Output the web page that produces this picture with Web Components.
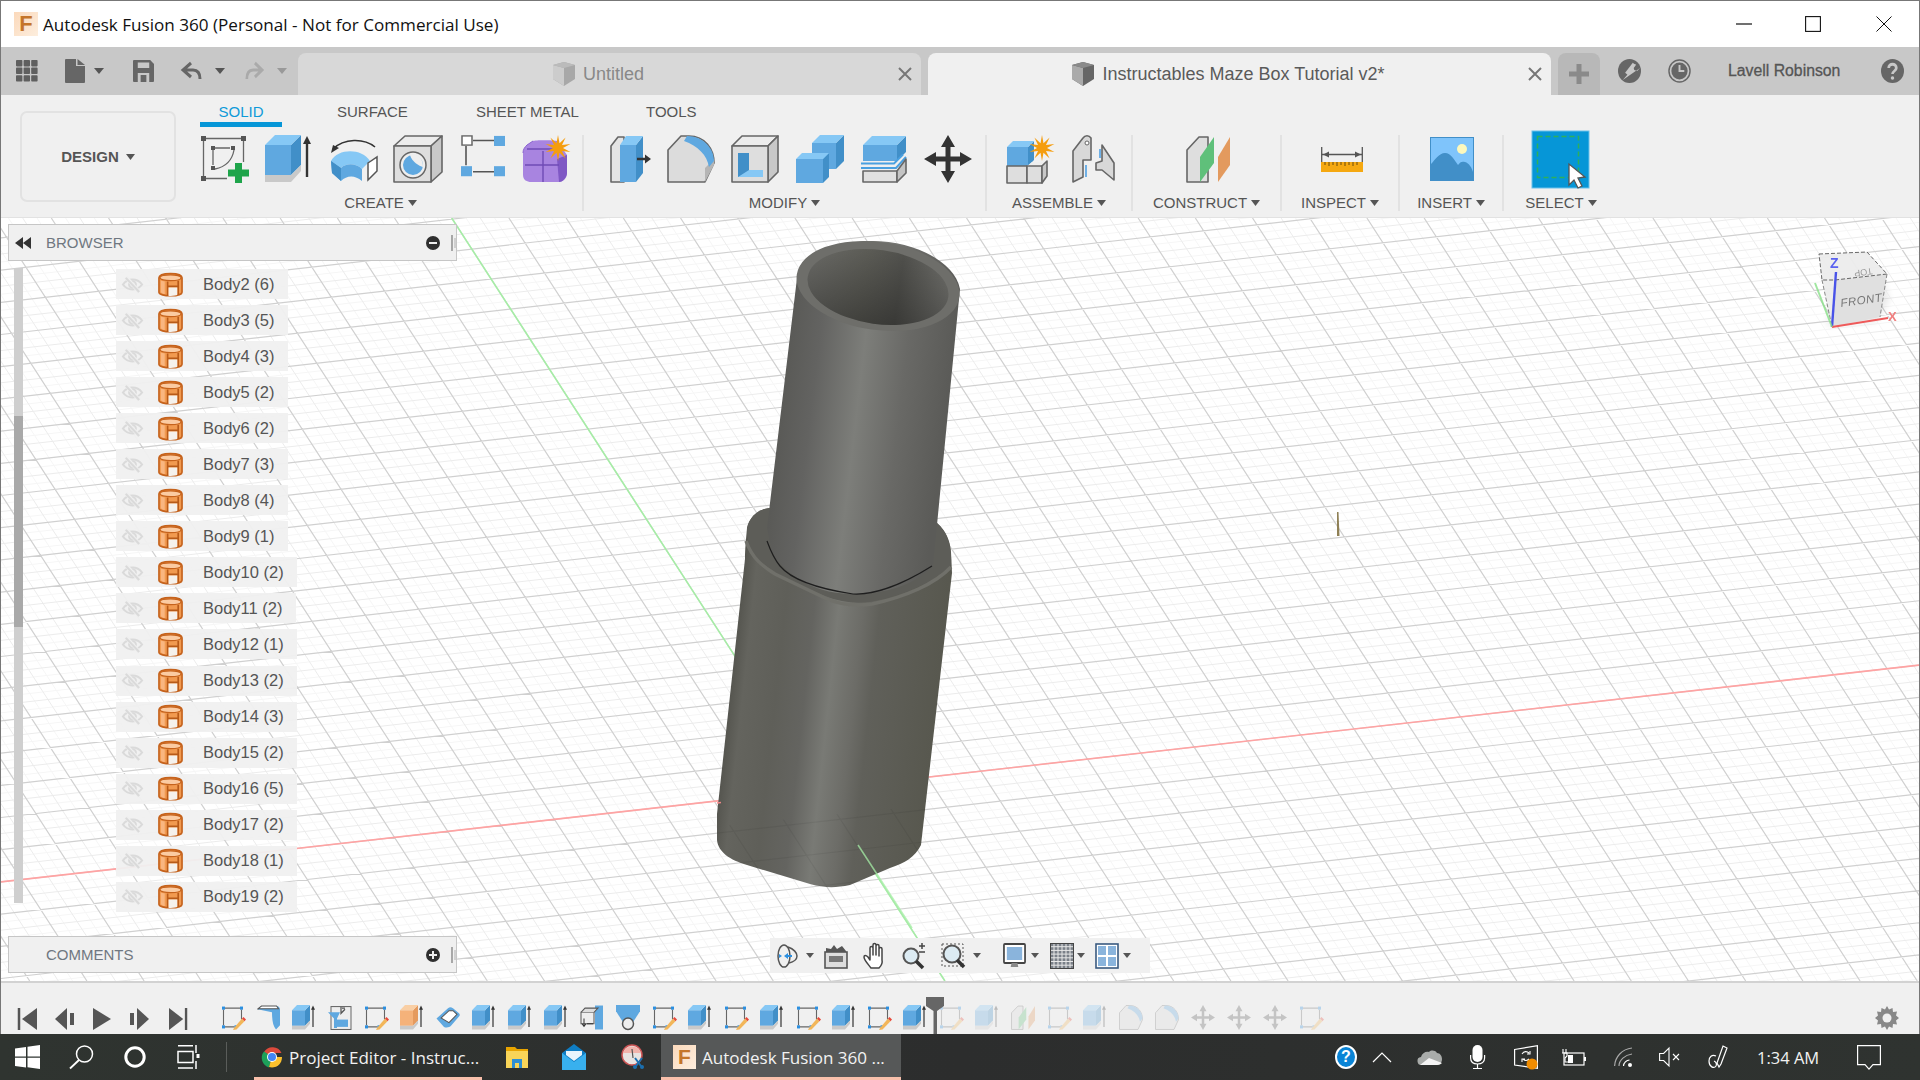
<!DOCTYPE html>
<html lang="en"><head><meta charset="utf-8"><title>Autodesk Fusion 360</title>
<style>html,body{margin:0;padding:0;background:#fff}body{width:1920px;height:1080px;overflow:hidden;font-family:"Liberation Sans",Arial,sans-serif}</style>
</head><body>
<fu-app>
 <fu-titlebar>Autodesk Fusion 360 (Personal - Not for Commercial Use)</fu-titlebar>
 <fu-tabbar user="Lavell Robinson">
  <fu-tab>Untitled</fu-tab>
  <fu-tab active>Instructables Maze Box Tutorial v2*</fu-tab>
 </fu-tabbar>
 <fu-ribbon>
  <fu-group label="CREATE" tools="sketch extrude revolve hole pattern purple" style="width:393px" pr="7" shift="3" lr="5"></fu-group>
  <fu-group label="MODIFY" tools="presspull fillet shell combine offset move" style="width:403px" shift="3"></fu-group>
  <fu-group label="ASSEMBLE" tools="newcomp joint" style="width:146px" shift="3"></fu-group>
  <fu-group label="CONSTRUCT" tools="construct" style="width:149px" shift="2"></fu-group>
  <fu-group label="INSPECT" tools="inspect" style="width:118px" shift="2"></fu-group>
  <fu-group label="INSERT" tools="insert" style="width:104px" shift="1"></fu-group>
  <fu-group label="SELECT" tools="select" style="width:114px" last></fu-group>
 </fu-ribbon>
 <fu-viewport>
  <fu-browser>
   <fu-body-row>Body2 (6)</fu-body-row><fu-body-row>Body3 (5)</fu-body-row><fu-body-row>Body4 (3)</fu-body-row>
   <fu-body-row>Body5 (2)</fu-body-row><fu-body-row>Body6 (2)</fu-body-row><fu-body-row>Body7 (3)</fu-body-row>
   <fu-body-row>Body8 (4)</fu-body-row><fu-body-row>Body9 (1)</fu-body-row><fu-body-row>Body10 (2)</fu-body-row>
   <fu-body-row>Body11 (2)</fu-body-row><fu-body-row>Body12 (1)</fu-body-row><fu-body-row>Body13 (2)</fu-body-row>
   <fu-body-row>Body14 (3)</fu-body-row><fu-body-row>Body15 (2)</fu-body-row><fu-body-row>Body16 (5)</fu-body-row>
   <fu-body-row>Body17 (2)</fu-body-row><fu-body-row>Body18 (1)</fu-body-row><fu-body-row>Body19 (2)</fu-body-row>
  </fu-browser>
  <fu-comments>COMMENTS</fu-comments>
  <fu-navbar></fu-navbar>
 </fu-viewport>
 <fu-timeline></fu-timeline>
</fu-app>
<fu-taskbar></fu-taskbar>
<script>
const B1='#5fa8e0',B2='#418fc8',B3='#86c8f5',OL='#666';
function star(cx,cy,r1,r2,n,fill){let p=[];for(let i=0;i<n*2;i++){const r=i%2?r2:r1,a=Math.PI*i/n;p.push((cx+r*Math.sin(a)).toFixed(1)+','+(cy-r*Math.cos(a)).toFixed(1));}return `<polygon points="${p.join(' ')}" fill="${fill||'#f59d0e'}"/>`;}
function cube(x,y,w,h,d,a,b,c,st){st=st||'';return `<path d="M${x} ${y}h${w}v${h}h${-w}z" fill="${a}" ${st}/><path d="M${x+w} ${y}l${d} ${-d}v${h}l${-d} ${d}z" fill="${b}" ${st}/><path d="M${x} ${y}l${d} ${-d}h${w}l${-d} ${d}z" fill="${c}" ${st}/>`;}
const G=`stroke="#666" stroke-width="1.6" stroke-linejoin="round"`;
function extr(a,b,c){return cube(0,10,26,30,10,a,b,c)+`<path d="M0 40h26l10-10v6L26 47H0z" fill="#c9c9c9"/><path d="M42 42V6" stroke="#333" stroke-width="2.4" fill="none"/><path d="M38 9l4-8 4 8z" fill="#333"/>`;}
function tsk(){return `<g fill="#2b8fe0"><rect x="2" y="3" width="6" height="6"/><rect x="38" y="3" width="6" height="6"/><rect x="2" y="39" width="6" height="6"/><rect x="27" y="39" width="5" height="5"/></g><path d="M8 6H38M5 9V39M8 42H27M41 9V28" stroke="#666" stroke-width="2.2" fill="none"/><path d="M26 44L42 26l5 5L31 47l-7 1z" fill="#f2b65a"/><path d="M42 26l3-3 5 5-3 3z" fill="#e8483a"/>`;}
const ICONS={
 grid:['0 0 22 22',(()=>{let s='';for(let r=0;r<3;r++)for(let c=0;c<3;c++)s+=`<rect x="${c*7.6}" y="${r*7.6}" width="6.4" height="6.4" rx=".8" fill="#5f5f5f"/>`;return s;})()],
 doc:['0 0 20 24','<path d="M0 1a1 1 0 0 1 1-1h10v7h9v16a1 1 0 0 1-1 1H1a1 1 0 0 1-1-1z" fill="#666"/><path d="M12.5 0L20 6h-7.500z" fill="#666"/>'],
 save:['0 0 22 22','<path d="M1 0h17l4 4v17a1 1 0 0 1-1 1H1a1 1 0 0 1-1-1V1a1 1 0 0 1 1-1z" fill="#666"/><rect x="5" y="2.500" width="12" height="5.500" fill="#c8c8c8"/><rect x="5" y="13" width="12" height="9" fill="#c8c8c8"/><rect x="8" y="15" width="6" height="7" fill="#666"/>'],
 undo:['0 0 20 18','<path d="M9 1L1 8l8 7M2 8h9c5 0 7 3 7 9" stroke="#666" stroke-width="3" fill="none"/>'],
 redo:['0 0 20 18','<path d="M11 1l8 7-8 7M18 8H9c-5 0-7 3-7 9" stroke="#aaa" stroke-width="3" fill="none"/>'],
 caret:['0 0 10 6','<path d="M0 0h10L5 6z" fill="#555"/>'],
 caretg:['0 0 10 6','<path d="M0 0h10L5 6z" fill="#999"/>'],
 cube:['0 0 24 24','<path d="M12 0l11 3v14l-11 7L1 17V3z" fill="#666"/><path d="M1 3l11 3v18L1 17z" fill="#aaa"/><path d="M1 3l11-3 11 3-11 3z" fill="#8a8a8a"/>'],
 cubeg:['0 0 24 24','<path d="M12 0l11 3v14l-11 7L1 17V3z" fill="#a8a8a8"/><path d="M1 3l11 3v18L1 17z" fill="#ccc"/><path d="M1 3l11-3 11 3-11 3z" fill="#bbb"/>'],
 x:['0 0 14 14','<path d="M1 1l12 12M13 1L1 13" stroke="#777" stroke-width="2" fill="none"/>'],
 plus:['0 0 42 42','<path d="M21 11v20M11 21h20" stroke="#8a8a8a" stroke-width="5" fill="none"/>'],
 wrench:['0 0 24 24','<circle cx="12" cy="12" r="12" fill="#666"/><path d="M5 21L14 11c-1-3 1-6 5-6l-3 3 1 3 3 1 3-3" fill="#c8c8c8"/><path d="M17 5L9 15" stroke="#c8c8c8" stroke-width="4"/>'],
 clock:['0 0 24 24','<circle cx="12" cy="12" r="11" fill="none" stroke="#666" stroke-width="1.500"/><circle cx="12" cy="12" r="8.500" fill="#666"/><path d="M12 6v6h5" stroke="#c8c8c8" stroke-width="2" fill="none"/>'],
 qmark:['0 0 24 24','<circle cx="12" cy="12" r="12" fill="#666"/><path d="M8 9c0-5 8-5 8 0 0 3-4 3-4 6" stroke="#c8c8c8" stroke-width="2.800" fill="none"/><circle cx="12" cy="19" r="1.800" fill="#c8c8c8"/>'],
 sketch:['0 0 48 48',`<g fill="#555"><rect x="0" y="1" width="5" height="5"/><rect x="40" y="1" width="5" height="5"/><rect x="0" y="41" width="5" height="5"/><rect x="10" y="11" width="4" height="4"/><rect x="30" y="11" width="4" height="4"/><rect x="10" y="31" width="4" height="4"/></g><path d="M5 3.500H40M2.500 6V41M5 43.500H26M42.500 6V27M14 13H29M12 15V30M14 34C24 32 31 26 33 15" stroke="#666" stroke-width="1.300" fill="none"/><path d="M37.500 28V48M27 38H48" stroke="#1ea44a" stroke-width="7" fill="none"/>`],
 extrude:['0 0 48 48',extr(B1,B2,B3)],
 revolve:['0 0 48 48',`<path d="M3 14C14 3 34 3 45 12" stroke="#333" stroke-width="1.600" fill="none"/><path d="M1 18l2-8 6 3z" fill="#333"/><path d="M1 26C8 13 32 13 40 26l-8 8C26 28 16 28 11 33z" fill="${B3}"/><path d="M1 26l10 7C16 28 26 28 32 34V46C25 40 17 40 11 46L2 38z" fill="${B1}"/><path d="M1 26l10 7v13l-9-8z" fill="${B2}"/><path d="M38 28l9-6v14l-9 9z" fill="#fff" stroke="#555" stroke-width="1.500"/>`],
 hole:['0 0 48 48',`<path d="M0 11L11 1h37L37 11z" fill="#ececec" ${G}/><path d="M37 11L48 1v36L37 47z" fill="#c8c8c8" ${G}/><rect x="0" y="11" width="37" height="36" fill="#dedede" ${G}/><circle cx="19" cy="30" r="13" fill="#eee" stroke="#666" stroke-width="1.500"/><circle cx="19" cy="30" r="10" fill="${B1}"/><path d="M16 20c8-2 13 3 13 12-4-1-11-5-13-12z" fill="#eee"/>`],
 pattern:['0 0 44 48',`<path d="M12 6H33M5 12V33M12 40H33" stroke="#555" stroke-width="1.600" fill="none"/><rect x="1" y="1" width="10" height="10" fill="#fff" stroke="#666" stroke-width="1.500"/><rect x="33" y="1" width="11" height="11" fill="${B1}"/><rect x="0" y="34" width="11" height="11" fill="${B1}"/><rect x="33" y="34" width="11" height="11" fill="${B1}"/>`],
 purple:['0 0 48 48',`<path d="M0 18c0-4 2-6 4-8l6-4c2-1 20-1 24 0l10 14v18c0 6-5 9-8 9H8c-4 0-8-2-8-7z" fill="#a884e0"/><path d="M34 24l10-4v18c0 4-4 9-8 9z" fill="#7f58c4"/><path d="M2 30H36M20 16V47M4 14h30" stroke="#6f4bb5" stroke-width="1.400" fill="none"/><path d="M0 18c0-4 2-6 4-8l6-4" stroke="#8a62d0" fill="none"/>${star(35,13,13,5,10)}`],
 presspull:['0 0 48 48',`<path d="M8 47V11l7-9h6v45z" fill="#e4e4e4" ${G}/><rect x="17" y="10" width="16" height="37" fill="${B1}"/><path d="M33 10l7-9v37l-7 9z" fill="${B2}"/><path d="M17 10l6-9h17l-7 9z" fill="${B3}"/><path d="M34 24H44" stroke="#333" stroke-width="2.500"/><path d="M42 19.500L48 24l-6 4.500z" fill="#333"/>`],
 fillet:['0 0 48 48',`<path d="M1 47V15L14 1h8C38 1 47 14 47 28L38 47z" fill="#dcdcdc" ${G}/><path d="M38 47V33l9-9v6z" fill="#b5b5b5"/><path d="M20 1C36 1 47 13 47 26l-5 6C40 20 31 11 17 6z" fill="${B1}"/>`],
 shell:['0 0 48 48',`<path d="M1 11L11 1h36L37 11z" fill="#ececec" ${G}/><path d="M37 11L47 1v36L37 47z" fill="#c8c8c8" ${G}/><rect x="1" y="11" width="36" height="36" fill="#dedede" ${G}/><path d="M7 18h11v24H7z" fill="${B2}"/><path d="M18 18v17h14v7H7l11-7z" fill="${B3}"/>`],
 combine:['0 0 48 48',cube(16,8,24,26,8,B1,B2,B3)+cube(0,24,27,24,6,B1,B2,B3)],
 offset:['0 0 48 48',cube(3,10,34,16,9,B1,B2,B3)+`<path d="M1 33L36 33 46 22M1 28.500h33l9-9" stroke="#4aa0e0" stroke-width="2" fill="none"/>`+`<path d="M3 36h34v11H3z" fill="#e0e0e0" ${G}/><path d="M37 47l9-9V24l-9 12z" fill="#c4c4c4" ${G}/>`],
 move:['0 0 48 48','<path d="M24 0l7 12h-4.500v9.500H36V17l12 7-12 7v-4.500h-9.500V36H31l-7 12-7-12h4.500v-9.500H12V31L0 24l12-7v4.500h9.500V12H17z" fill="#333"/>'],
 newcomp:['0 0 48 48',cube(1,12,21,19,6,B1,B2,B3)+`<rect x="1" y="31" width="20" height="17" fill="#dedede" ${G}/><path d="M21 31h15l4-4H26z" fill="#eee"/><rect x="21" y="31" width="15" height="17" fill="#dedede" ${G}/><path d="M36 31l5-5v15l-5 7z" fill="#c8c8c8" ${G}/>${star(36,13,13,5,10)}`],
 joint:['0 0 44 48',`<path d="M1 16l10-13c2-3 6-3 8 0V25H11V42l-10 5z" fill="#d8d8d8" ${G}/><path d="M24 28l6-2V10l12 18v17L30 35h-6z" fill="#d8d8d8" ${G}/><circle cx="15" cy="8" r="2" fill="#fff" stroke="#666"/><path d="M28 14v9M14 30v12" stroke="#2b8fe0" stroke-width="1.300"/>`],
 construct:['0 0 44 48',`<path d="M1 47V15L13 2h9v45z" fill="#dedede" ${G}/><path d="M14 47L28 28V2L14 22z" fill="#5fc07a"/><path d="M32 47V22L44 2v28z" fill="#e39a5e"/>`],
 inspect:['0 0 42 25',`<path d="M.7 0v15M41.300 0v15" stroke="#555" stroke-width="1.300"/><path d="M1 7.500H41" stroke="#555" stroke-width="1.500"/><path d="M2 7.500l6-3v6zM40 7.500l-6-3v6z" fill="#555"/><rect x="0" y="15" width="42" height="10" fill="#f5a810"/><path d="M4 15v3M8 15v4M12 15v3M16 15v4M20 15v3M24 15v4M28 15v3M32 15v4M36 15v3" stroke="#6a4a0a" stroke-width="1"/>`],
 insert:['0 0 44 44',`<rect x=".5" y=".5" width="43" height="43" fill="#7fc4fb" stroke="${B2}"/><path d="M1 43V27c4-4 8-11 14-11 6 0 10 8 13 12 2-3 4-4 7-3 4 1 7 6 8 10v8z" fill="${B2}"/><circle cx="32" cy="12" r="5" fill="#fcf8bd"/>`],
 select:['0 0 57 57',`<rect width="57" height="57" fill="#0696d7" stroke="#6ac0ea"/><rect x="5.500" y="5.500" width="41" height="41" fill="none" stroke="#2eb05a" stroke-width="1.500" stroke-dasharray="5 3"/><path d="M37 33v21l5-5 4 8 4-2-4-8 7-1z" fill="#fff" stroke="#555" stroke-width="1.300"/>`],
 eye:['0 0 22 18','<g fill="none" stroke="#dadada" stroke-width="2.200"><path d="M1 9c5-7 15-7 20 0-5 7-15 7-20 0z"/><circle cx="11" cy="9" r="3.500"/><path d="M4 1l14 16" stroke="#efefef" stroke-width="4"/><path d="M4 2l14 15"/></g>'],
 body:['0 0 26 26','<path d="M1 6c0-6 24-6 24 0v15c0 5-24 5-24 0z" fill="#f19a50" stroke="#c5621c" stroke-width="1.700"/><path d="M2 6c0-4 22-4 22 0s-22 4-22 0z" fill="#fbcba2" stroke="#c5621c" stroke-width="1.200"/><path d="M3 9v12c1 1 3 2 4 2V10z" fill="#f9b680"/><path d="M10 10v15M21 9v15M10 15h11" stroke="#b85a18" stroke-width="1.700" fill="none"/><path d="M11 16h9v8c-3 1-6 1-9 1z" fill="#f5f1ec"/>'],
 rew:['0 0 16 12','<path d="M8 0v12L0 6zM16 0v12L8 6z" fill="#333"/>'],
 minus:['0 0 14 14','<circle cx="7" cy="7" r="7" fill="#2f2f2f"/><path d="M3 7h8" stroke="#eee" stroke-width="2"/>'],
 pluscirc:['0 0 14 14','<circle cx="7" cy="7" r="7" fill="#2f2f2f"/><path d="M3 7h8M7 3v8" stroke="#eee" stroke-width="2"/>'],
 divider:['0 0 5 16','<path d="M1 0v16" stroke="#777" stroke-width="1.200"/><path d="M4 3v10" stroke="#bbb" stroke-width="1.200"/>'],
 orbit:['0 0 24 26','<g fill="none" stroke="#555" stroke-width="1.500"><ellipse cx="10" cy="13" rx="6" ry="11"/><path d="M14 4c6 2 9 6 9 9s-3 6-8 7"/></g><path d="M10 13l4-3v2h4v2h-4v2z" fill="#2b8fe0"/><path d="M5 11l3 2-3 2zM1 13h4" fill="#2b8fe0"/>'],
 look:['0 0 24 26','<rect x="1" y="9" width="22" height="16" fill="#ddd" stroke="#555" stroke-width="1.600"/><rect x="5" y="13" width="14" height="6" fill="#777"/><path d="M2 9V5l5 1 3-4 3 4 5-3 4 5v1z" fill="#555"/>'],
 hand:['0 0 25 28','<path d="M8 26C5 22 1 18 1 15c0-2 2-2 4 0l2 3V6c0-2 3-2 3 0v7-10c0-2 3-2 3 0v10V4c0-2 3-2 3 0v10-7c0-2 3-2 3 0v11c1 4-1 6-3 8z" fill="#fff" stroke="#444" stroke-width="1.500" stroke-linejoin="round"/>'],
 zoomi:['0 0 24 26','<circle cx="9" cy="13" r="7.500" fill="#dcebf3" stroke="#555" stroke-width="2"/><path d="M14 18l7 7" stroke="#333" stroke-width="3.500"/><path d="M17 3h6M20 0v6M17 9h6" stroke="#444" stroke-width="1.500"/>'],
 fit:['0 0 24 26','<rect x="1" y="1" width="21" height="22" fill="none" stroke="#555" stroke-dasharray="2 2"/><circle cx="11" cy="11" r="8.500" fill="#dcebf3" stroke="#555" stroke-width="2"/><path d="M16 17l7 7" stroke="#333" stroke-width="3.500"/>'],
 display:['0 0 24 26','<rect x="1" y="1" width="22" height="19" rx="1" fill="#fff" stroke="#444" stroke-width="1.800"/><rect x="4" y="4" width="16" height="13" fill="#8ab4dc"/><path d="M8 24h8l-1-4H9z" fill="#888"/>'],
 gridv:['0 0 24 26',(()=>{let s='<rect x="0" y="0" width="24" height="26" fill="#7a8088"/>';for(let i=1;i<6;i++)s+=`<path d="M${i*4} 0v26" stroke="#e8e8e8"/>`;for(let i=1;i<7;i++)s+=`<path d="M0 ${i*3.700}h24" stroke="#e8e8e8"/>`;return s+'<rect x=".5" y=".5" width="23" height="25" fill="none" stroke="#444"/>';})()],
 views:['0 0 24 26','<rect x="1" y="1" width="22" height="24" fill="#fff" stroke="#3a5a80" stroke-width="1.600"/><g fill="#8ab4dc"><rect x="3" y="3" width="8" height="9"/><rect x="13" y="3" width="8" height="9"/><rect x="3" y="14" width="8" height="9"/><rect x="13" y="14" width="8" height="9"/></g>'],
 first:['0 0 19 22','<path d="M1 0v22" stroke="#555" stroke-width="2.500"/><path d="M19 0v22L4 11z" fill="#555"/>'],
 prev:['0 0 19 22','<path d="M12 0v22L0 11z" fill="#555"/><rect x="15" y="5" width="4" height="12" fill="#555"/>'],
 play:['0 0 18 24','<path d="M0 0l18 12L0 24z" fill="#555"/>'],
 next:['0 0 19 22','<path d="M7 0v22l12-11z" fill="#555"/><rect x="0" y="5" width="4" height="12" fill="#555"/>'],
 last:['0 0 19 22','<path d="M18 0v22" stroke="#555" stroke-width="2.500"/><path d="M0 0v22l15-11z" fill="#555"/>'],
 tsk:['0 0 48 48',tsk()],
 ext:['0 0 48 48',extr(B1,B2,B3)],
 org:['0 0 48 48',extr('#f5b27a','#e59a5e','#f9cfa5')],
 tsw:['0 0 48 48',`<path d="M1 8l8-6h30c4 0 7 3 7 7v30l-8 8c-6-6-8-18-8-33z" fill="${B1}"/><path d="M1 8l8-6h30l4 5H4z" fill="#fff" stroke="#555" stroke-width="2"/>`],
 tpl:['0 0 48 48',`<rect x="6" y="3" width="40" height="44" fill="#eee" stroke="#666" stroke-width="2"/><path d="M0 14h24l-6 12v18H12V26z" fill="${B1}"/><path d="M26 4v12l8-8M28 6h6" stroke="#555" stroke-width="2.500" fill="none"/><rect x="18" y="28" width="22" height="14" fill="${B1}"/>`],
 era:['0 0 48 48',`<path d="M1 26L24 6c3-2 6-2 10 0l12 10c2 2 2 4 0 6L30 40c-3 3-9 4-14 2z" fill="${B1}"/><path d="M10 25L26 11h8l8 7-16 16z" fill="#fff" stroke="#555" stroke-width="2"/>`],
 tbx:['0 0 48 48',`<rect x="30" y="1" width="16" height="46" fill="${B1}"/><path d="M2 14h26v22H2z" fill="#eee" stroke="#555" stroke-width="2"/><path d="M2 14l8-8h26l-8 8" fill="#ddd" stroke="#555" stroke-width="2"/><path d="M8 26v14M4 36l4 5 4-5M14 36h12" stroke="#333" stroke-width="2" fill="none"/>`],
 tfn:['0 0 48 48',`<path d="M0 0h48v12L32 36H16L0 12z" fill="${B1}"/><circle cx="24" cy="36" r="11" fill="#eee" stroke="#555" stroke-width="3"/>`],
 con:['0 0 44 48',`<path d="M1 47V15L13 2h9v45z" fill="#dedede" ${G}/><path d="M14 47V24L28 4v24z" fill="#5fc07a"/><path d="M32 47V22L44 2v28z" fill="#e39a5e"/>`],
 fil:['0 0 48 48',`<path d="M1 47V15L14 1h8C38 1 47 14 47 28L38 47z" fill="#dcdcdc" ${G}/><path d="M20 1C36 1 47 13 47 26l-5 6C40 20 31 11 17 6z" fill="${B1}"/>`],
 mov:['0 0 48 48','<path d="M24 0l7 12h-4.500v9.500H36V17l12 7-12 7v-4.500h-9.500V36H31l-7 12-7-12h4.500v-9.500H12V31L0 24l12-7v4.500h9.500V12H17z" fill="#555"/>'],
 gear:['0 0 24 24',`<path d="M12 0l2 3.500 3.500-1.500.5 4 4-.5-1 4 3 2.500-3 2.500 1 4-4-.5-.5 4-3.500-1.500L12 24l-2-3.500-3.500 1.500-.5-4-4 .5 1-4L0 12l3-2.500-1-4 4 .5.500-4L10 3.500z" fill="#888"/><circle cx="12" cy="12" r="4.500" fill="#f0f0f0"/>`],
 win:['0 0 25 24','<path d="M0 3.500L11 2v9.500H0zM12.500 1.800L25 0v11.500H12.500zM0 12.800h11v9.600L0 21zM12.500 12.800H25V24l-12.500-1.800z" fill="#fff"/>'],
 search:['0 0 25 24','<circle cx="15.500" cy="9" r="8" fill="none" stroke="#fff" stroke-width="1.500"/><path d="M10 15L1 23.500" stroke="#fff" stroke-width="1.800"/>'],
 ring:['0 0 22 22','<circle cx="11" cy="11" r="9.200" fill="none" stroke="#fff" stroke-width="3"/>'],
 taskview:['0 0 25 24','<path d="M1 .8h15M1 23h15M1 6.500h15v11H1zM19 0v8M19 16v8" stroke="#fff" stroke-width="1.500" fill="none"/><rect x="19.500" y="9" width="3" height="4" fill="#fff"/>'],
 chrome:['0 0 22 22','<path d="M11 11L3 6a10 10 0 0 1 17.500 1H11z" fill="#dd4a3c"/><path d="M11 11L3 5.500a10 10 0 0 0 5 16z" fill="#1da15a"/><path d="M11 11h10a10 10 0 0 1-13 10z" fill="#fbc02d"/><circle cx="11" cy="11" r="5" fill="#fff"/><circle cx="11" cy="11" r="4" fill="#4286f5"/>'],
 folder:['0 0 22 22','<path d="M0 1h9l2 2h11v3H0z" fill="#e8a400"/><rect x="0" y="5" width="22" height="17" fill="#f8d458"/><rect x="6" y="13" width="10" height="9" fill="#2e8fd4"/><rect x="9" y="17" width="4" height="5" fill="#f8d458"/>'],
 mail:['0 0 24 26','<path d="M12 0l12 9v17H0V9z" fill="#0f7dc4"/><path d="M0 9l12 9 12-9v17H0z" fill="#38b0ee"/><path d="M4 7h16v4l-8 6-8-6z" fill="#e8f4fc"/>'],
 snip:['0 0 24 26','<circle cx="12" cy="11" r="10" fill="#e8e4e2" stroke="#c55" stroke-width="1.500"/><path d="M3 9a9.500 9.500 0 0 1 18 0z" fill="#f1b4ac"/><path d="M12 5l1 9" stroke="#555" stroke-width="1.200"/><path d="M15 14l6 8M22 14l-6 8" stroke="#1a6fb0" stroke-width="2"/><circle cx="15" cy="23" r="2" fill="#1a6fb0"/><circle cx="22" cy="23" r="2" fill="#1a6fb0"/>'],
 chev:['0 0 18 10','<path d="M0 10l9-9 9 9" fill="none" stroke="#fff" stroke-width="1.200"/>'],
 cloud:['0 0 24 16','<path d="M4 16a4 4 0 0 1-1-8c1-4 5-6 8-5 2-2 6-2 8 1 3 0 5 3 5 6 0 4-3 6-5 6z" fill="#a9acaa"/><path d="M2 16l9-7 13 5c-1 1-3 2-5 2z" fill="#f4f4f4"/>'],
 mic:['0 0 15 24','<rect x="2.500" y="0" width="10" height="17" rx="5" fill="#fff"/><path d="M.6 10v3c0 4 3 6 7 6s7-2 7-6v-3M7.500 19v4M3 23.500h9" stroke="#fff" stroke-width="1.200" fill="none"/>'],
 tablet:['0 0 24 24','<path d="M.6 4.500L23.400.6v22.800L.6 20z" fill="none" stroke="#fff" stroke-width="1.200"/><path d="M8 9c2-3 5-3 7-1M16 6v3h-3M15 14c-2 2-4 2-6 0M8 17v-3h3" fill="none" stroke="#fff" stroke-width="1.100"/><circle cx="18" cy="19" r="5.500" fill="#f08c00"/>'],
 battery:['0 0 24 18','<rect x="2" y="5" width="20" height="12" fill="none" stroke="#fff" stroke-width="1.200"/><rect x="22" y="9" width="2" height="4" fill="#fff"/><rect x="6" y="7" width="5" height="8" fill="#fff"/><path d="M1 1v4M4 1v4M0 5h5v3l-2 2v4h5" stroke="#fff" stroke-width="1.100" fill="none"/>'],
 wifi:['0 0 18 20','<g fill="none" stroke="#aaa" stroke-width="1.200"><path d="M.6 19C1 10 8 2 18 1"/><path d="M5 19c0-6 6-11 13-12"/></g><path d="M9.500 19c0-3 3-6 6-6" fill="none" stroke="#fff" stroke-width="1.200"/><circle cx="16" cy="18" r="2" fill="#fff"/>'],
 vol:['0 0 21 20','<path d="M.6 6.500h4L10 1v18l-5.400-5.500h-4z" fill="none" stroke="#fff" stroke-width="1.100"/><path d="M14 7l6 6M20 7l-6 6" stroke="#fff" stroke-width="1.100"/>'],
 pen:['0 0 20 24','<path d="M9 18L15 1l4 2-6 16-2 3zM8 11c-4-2-7 1-7 5 0 6 5 8 7 5 1-2 0-4-2-5" fill="none" stroke="#fff" stroke-width="1.200"/>'],
 notif:['0 0 24 25','<path d="M.6.6h22.800v19H16l-4 4.500-4-4.500H.6z" fill="none" stroke="#fff" stroke-width="1.200"/>']
};
const host=(s,extra='')=>`<style>:host{${s}}${extra}</style>`;
function ic(name,w,h,st=''){return `<fu-icon name="${name}" style="width:${w}px;height:${h}px;${st}"></fu-icon>`;}
class Base extends HTMLElement{constructor(){super();this.attachShadow({mode:'open'});}}
class FuIcon extends Base{connectedCallback(){const d=ICONS[this.getAttribute('name')];this.shadowRoot.innerHTML=host('display:block;flex:none','svg{display:block;width:100%;height:100%;overflow:visible}')+`<svg viewBox="${d[0]}" preserveAspectRatio="none" xmlns="http://www.w3.org/2000/svg">${d[1]}</svg>`;}}
class FuApp extends Base{connectedCallback(){this.shadowRoot.innerHTML=host('display:flex;flex-direction:column;box-sizing:border-box;width:1920px;height:1034px;border:solid #777;border-width:1px 1px 0 1px;overflow:hidden;background:#fff')+'<slot></slot>';}}
class FuTitlebar extends Base{connectedCallback(){this.shadowRoot.innerHTML=host('display:flex;align-items:center;flex:none;height:46px;background:#fff;color:#111;font:17.1px "Open Sans","Noto Sans",sans-serif',`
 .logo{width:24px;height:24px;margin-left:13px;background:linear-gradient(135deg,#fbd9bb,#fdeede);color:#c5752a;font:bold 22px/24px "Liberation Sans",sans-serif;text-align:center;flex:none}
 .t{margin-left:5px;white-space:nowrap}.r{margin-left:auto;display:flex;align-items:center}
 svg{display:block}`)+`<div class="logo">F</div><div class="t"><slot></slot></div><div class="r">
 <svg width="16" height="2" style="margin-right:53px"><path d="M0 1h16" stroke="#111" stroke-width="1.200"/></svg>
 <svg width="16" height="16" style="margin-right:55px"><rect x=".6" y=".6" width="14.800" height="14.800" fill="none" stroke="#111" stroke-width="1.100"/></svg>
 <svg width="16" height="16" style="margin-right:27px"><path d="M.5.5l15 15M15.500.5l-15 15" stroke="#111" stroke-width="1"/></svg></div>`;}}
class FuTab extends Base{connectedCallback(){const a=this.hasAttribute('active');this.shadowRoot.innerHTML=host(`display:flex;align-items:center;flex:none;box-sizing:border-box;width:623px;height:42px;border-radius:8px 8px 0 0;background:${a?'#f0f0f0':'#d8d8d8'};color:${a?'#5a5a5a':'#888'};font:18px "Liberation Sans",sans-serif`,'.c{flex:1;display:flex;justify-content:center;align-items:center;gap:7px;white-space:nowrap}')+`<div class="c">${ic(a?'cube':'cubeg',24,24)}<span><slot></slot></span></div>${ic('x',14,14,'margin-right:9px')}`;}}
class FuTabbar extends Base{connectedCallback(){this.shadowRoot.innerHTML=host('display:flex;align-items:center;flex:none;height:48px;background:#c8c8c8;padding-left:14.5px',`
 ::slotted(fu-tab){align-self:flex-end;margin-right:7px}.tabs{display:flex;align-items:flex-end;align-self:flex-end;margin-left:11px}
 .p{width:42px;height:42px;background:#b8b8b8;border-radius:8px 8px 0 0;align-self:flex-end;display:flex;flex:none}
 .u{margin-left:37px;width:113px;white-space:nowrap;font:15.8px "Liberation Sans",sans-serif;color:#555;-webkit-text-stroke:.3px #555}`)+
 ic('grid',22,22)+ic('doc',20,24,'margin-left:27.5px')+ic('caret',10,6,'margin-left:9px')+ic('save',21,22,'margin-left:29px')+ic('undo',20,18,'margin-left:28px')+ic('caret',10,6,'margin-left:13px')+ic('redo',18,18,'margin-left:20px')+ic('caretg',10,6,'margin-left:14px')+
 `<div class="tabs"><slot></slot></div><div class="p">${ic('plus',42,42)}</div>`+
 ic('wrench',23,24,'margin-left:18px')+ic('clock',23,24,'margin-left:27px')+`<div class="u">${this.getAttribute('user')}</div>`+ic('qmark',23,24,'margin-left:40px');}}
class FuRibbon extends Base{connectedCallback(){this.shadowRoot.innerHTML=host('display:flex;flex:none;height:122px;background:#f0f0f0;border-bottom:1px solid #e2e2e2;color:#555;font:15px "Liberation Sans",sans-serif',`
 .d{box-sizing:border-box;margin:16px 15px 0 19px;width:156px;height:91px;border:2px solid #e2e2e2;border-radius:7px;display:flex;align-items:center;justify-content:center;gap:7px;font-weight:bold;flex:none}
 .col{display:flex;flex-direction:column}.tabs{display:flex;padding-left:9px;height:32px}
 .t{box-sizing:border-box;height:32px;padding-top:7px;line-height:20px;text-align:center;white-space:nowrap;flex:none}
 .on{color:#0e9ad9;border-bottom:5px solid #0696d7}
 .g{display:flex;padding-top:8px}`)+`<div class="d">DESIGN ${ic('caret',9,6)}</div><div class="col"><div class="tabs">
 <div class="t on" style="width:82px">SOLID</div><div class="t" style="width:68px;margin-left:55px">SURFACE</div><div class="t" style="width:102px;margin-left:71px">SHEET METAL</div><div class="t" style="width:48px;margin-left:68px">TOOLS</div></div><div class="g"><slot></slot></div></div>`;}}
const ISZ={pattern:[44,44,'margin-top:0'],joint:[44,48],construct:[44,48],inspect:[42,25,'margin-top:12px'],insert:[44,44,'margin-top:2px'],select:[57,57,'margin-top:-4px;margin-bottom:-5px']};
class FuGroup extends Base{connectedCallback(){const tools=this.getAttribute('tools').split(' '),pr=this.getAttribute('pr')||0,sh=(this.getAttribute('shift')||0)*2,lr=this.getAttribute('lr')||0;this.shadowRoot.innerHTML=host(`display:flex;flex-direction:column;align-items:center;box-sizing:border-box;flex:none;height:76px;padding-right:${pr}px;${this.hasAttribute('last')?'':'border-right:2px solid #e2e2e2'}`,`
 .i{display:flex;justify-content:center;height:48px;margin-left:${sh}px}.c{width:64.4px;display:flex;justify-content:center;align-items:flex-start;height:48px}
 .l{margin-top:10px;margin-right:${lr}px;height:20px;line-height:20px;display:flex;align-items:center;gap:4px;white-space:nowrap}`)+
 `<div class="i">${tools.map(t=>{const s=ISZ[t]||[48,48,''];return `<div class="c">${ic(t,s[0],s[1],s[2]||'')}</div>`;}).join('')}</div><div class="l">${this.getAttribute('label')}${ic('caret',9,6)}</div>`;}}
class FuViewport extends Base{connectedCallback(){
 const GY=882,SL=-0.113,DY=32.2,GX=453,DX=57.2,SB=1.547;
 const X0=1,Y0=218,W=1918,H=763;
 const lineA=o=>`M${X0} ${(GY+SL*X0+o).toFixed(2)}L${X0+W} ${(GY+SL*(X0+W)+o).toFixed(2)}`;
 const lineB=o=>{const x=y=>GX+o+(y-220)/SB;return `M${x(Y0).toFixed(2)} ${Y0}L${x(Y0+H).toFixed(2)} ${Y0+H}`;};
 let maj='',mid='',min='';
 for(let i=-80;i<=40;i++){const o=i*DY/4,d=lineA(o),m=((i%4)+4)%4;if(m==0)maj+=d;else if(m==2)mid+=d;else min+=d;}
 for(let i=-240;i<=120;i++){const o=i*DX/4,d=lineB(o),m=((i%4)+4)%4;if(m==0)maj+=d;else if(m==2)mid+=d;else min+=d;}
 const BODY='M747 528C750 515 760 508 772 508L937 523C946 531 950 540 951 552L952 573L921 845C915 857 905 863 890 868L850 885C835 888 825 888 810 884L747 865C730 860 718 852 717 840L717 814L745 559C745 548 746 540 747 528Z';
 const svg=`<svg class="c" viewBox="${X0} ${Y0} ${W} ${H}" width="${W}" height="${H}" xmlns="http://www.w3.org/2000/svg">
 <defs>
 <linearGradient id="gb" gradientUnits="userSpaceOnUse" x1="745" y1="559" x2="949" y2="581"><stop offset="0" stop-color="#565650"/><stop offset=".06" stop-color="#64645e"/><stop offset=".22" stop-color="#5f5f59"/><stop offset=".36" stop-color="#646460"/><stop offset=".48" stop-color="#797a75"/><stop offset=".6" stop-color="#6c6c67"/><stop offset=".68" stop-color="#60605a"/><stop offset="1" stop-color="#58584f"/></linearGradient>
 <linearGradient id="gt" gradientUnits="userSpaceOnUse" x1="797" y1="278" x2="959" y2="297"><stop offset="0" stop-color="#5a5a57"/><stop offset=".18" stop-color="#636361"/><stop offset=".46" stop-color="#7d7e7a"/><stop offset=".72" stop-color="#696966"/><stop offset="1" stop-color="#5b5b58"/></linearGradient>
 <linearGradient id="gh" x1="0" x2="1" y1="0" y2="0"><stop offset="0" stop-color="#6d6d69"/><stop offset=".4" stop-color="#5c5c56"/><stop offset=".65" stop-color="#50504c"/><stop offset="1" stop-color="#6f6f6b"/></linearGradient>
 <linearGradient id="gv" x1="0" x2="0" y1="0" y2="1"><stop offset="0" stop-color="#000" stop-opacity="0"/><stop offset="1" stop-color="#000" stop-opacity=".3"/></linearGradient>
 <clipPath id="sil"><path d="${BODY}"/></clipPath><clipPath id="low"><path d="M700 828L940 804V900H700Z"/></clipPath>
 <filter id="soft"><feGaussianBlur stdDeviation=".7"/></filter><filter id="sh"><feGaussianBlur stdDeviation="3"/></filter>
 </defs>
 <rect x="${X0}" y="${Y0}" width="${W}" height="${H}" fill="#fff"/>
 <path d="${min}" stroke="#f6f6f6" stroke-width="1" fill="none"/><path d="${mid}" stroke="#ececec" stroke-width="1" fill="none"/><path d="${maj}" stroke="#d0d0d0" stroke-width="1.200" fill="none"/>
 <path d="${lineA(0)}" stroke="#ffa3a3" stroke-width="1.600" fill="none"/><path d="${lineB(0)}" stroke="#a6eda6" stroke-width="1.600" fill="none"/>
 <path d="M1337 512l1.500 0 1 24h-2.500z" fill="#8f8055"/>
 <path d="${BODY}" fill="url(#gb)"/>
 <path d="M747 528C750 515 760 508 772 508L937 523C947 532 952 545 951 565C935 582 905 595 870 602C855 604 840 602 825 596L770 572C755 565 747 550 747 528Z" fill="#5d5d58"/>
 <path d="M746 541C752 558 762 566 775 574L825 598C840 605 857 606 872 604C905 597 935 584 951 567" stroke="#70706a" stroke-width="3.500" fill="none"/>
 <path d="M797 278C805 258 835 241 872 241C915 241 955 262 960 289L958 309L933 566C915 585 885 594 853 594C820 594 790 580 772 553L767 528Z" fill="url(#gt)"/>
 <path d="M767 541C771 552 775 560 780 566C790 578 813 588 853 594C870 595 897 588 932 566" stroke="#1e1e1e" stroke-width="1.200" fill="none"/>
 <ellipse cx="878" cy="286" rx="82" ry="44" transform="rotate(8 878 286)" fill="#6e6e6a"/>
 <ellipse cx="878" cy="287" rx="71" ry="37" transform="rotate(8 878 287)" fill="url(#gh)"/>
 <ellipse cx="878" cy="287" rx="71" ry="37" transform="rotate(8 878 287)" fill="url(#gv)"/>
 <g clip-path="url(#sil)"><g clip-path="url(#low)"><path d="${maj}" stroke="#000" stroke-opacity=".06" stroke-width="1.200" fill="none"/></g></g>
 <path d="M858 845L912 928" stroke="#a6eda6" stroke-opacity=".75" stroke-width="1.600"/>
 <path d="M717 803L721 802.500" stroke="#e88" stroke-width="1.400"/>
 <g filter="url(#soft)">
  <path d="M1826 326L1876 322L1890 300L1880 270L1835 290Z" fill="#000" opacity=".08" filter="url(#sh)"/>
  <path d="M1819 254L1867 252L1887 274L1880 317L1832 327L1822 280Z" fill="#ececec" opacity=".95"/>
  <path d="M1835 280L1887 274L1880 317L1832 327Z" fill="#e0e0e0"/>
  <path d="M1819 254L1867 252L1887 274L1835 280L1822 280Z" stroke="#666" stroke-width="1" stroke-dasharray="4 2" fill="none"/>
  <path d="M1822 280L1832 327M1887 274L1880 317" stroke="#888" stroke-width="1" stroke-dasharray="4 2" fill="none"/>
  <path d="M1832 327L1836 272" stroke="#4a52e8" stroke-width="2.400"/>
  <path d="M1832 327L1888 318" stroke="#ee5a5a" stroke-width="2"/>
  <path d="M1832 327L1815 283" stroke="#88e088" stroke-width="2" opacity=".8"/>
  <text x="1830" y="268" font-family="Liberation Sans" font-size="14" font-weight="bold" fill="#5a62f0">Z</text>
  <text x="1888" y="321" font-family="Liberation Sans" font-size="13" font-weight="bold" fill="#f08080">X</text>
  <text transform="translate(1841 307) rotate(-8)" font-family="Liberation Sans" font-size="11.500" font-style="italic" fill="#777" letter-spacing=".5">FRONT</text>
  <text transform="translate(1872 268) rotate(172)" font-family="Liberation Sans" font-size="9" fill="#999">TOP</text>
 </g>
 </svg>`;
 this.shadowRoot.innerHTML=host('display:block;position:relative;flex:1;min-height:0;overflow:hidden;background:#fff','.c{position:absolute;left:0;top:0;display:block}')+svg+'<slot></slot>';}}
function panelHead(text,icons){return `<div class="h"><span class="t">${text}</span>${icons}</div>`;}
const headCss=`.h{display:flex;align-items:center;box-sizing:border-box;height:37px;width:449px;background:#f0f0f0;border:1px solid #c6c6c6;font:15px "Liberation Sans",sans-serif;color:#6f7780;position:relative}.t{white-space:nowrap}`;
class FuBrowser extends Base{connectedCallback(){this.shadowRoot.innerHTML=host('display:block;position:absolute;left:7px;top:6px;width:449px',headCss+`
 .b{display:flex;padding-top:7px}.tr{width:9px;height:635px;margin-left:6px;background:#cfcfcf;flex:none;padding-top:148px;box-sizing:border-box}.th{height:211px;background:#a9a9a9}
 .rows{display:flex;flex-direction:column;align-items:flex-start;gap:6.06px;margin-left:93px;margin-top:1px}`)+
 panelHead('BROWSER',ic('minus',14,14,'margin-left:auto')+ic('divider',5,16,'margin:0 0 0 11px')).replace('<span class="t">',ic('rew',16,12,'margin-left:6px')+'<span class="t" style="margin-left:15px">')+
 `<div class="b"><div class="tr"><div class="th"></div></div><div class="rows"><slot></slot></div></div>`;}}
class FuComments extends Base{connectedCallback(){this.shadowRoot.innerHTML=host('display:block;position:absolute;left:7px;top:718px;width:449px',headCss)+`<div class="h"><span class="t" style="margin-left:37px"><slot></slot></span>${ic('pluscirc',14,14,'margin-left:auto')}${ic('divider',5,16,'margin:0 0 0 11px')}</div>`;}}
class FuBodyRow extends Base{connectedCallback(){this.shadowRoot.innerHTML=host('display:flex;align-items:center;box-sizing:border-box;height:30px;padding:0 13px 0 6px;background:rgba(240,240,240,.94);color:#555;font:16.5px "Liberation Sans",sans-serif;white-space:nowrap')+ic('eye',21,17)+ic('body',25,25,'margin-left:15px')+`<span style="margin-left:20px"><slot></slot></span>`;}}
class FuNavbar extends Base{connectedCallback(){this.shadowRoot.innerHTML=host('display:flex;align-items:center;position:absolute;left:769px;top:720px;width:380px;height:35px;background:#f0f0f0;padding-left:4px;box-sizing:border-box')+
 ic('orbit',24,26)+ic('caret',8,5,'margin-left:8px')+ic('look',24,26,'margin-left:10px')+ic('hand',25,28,'margin-left:15px')+ic('zoomi',24,26,'margin-left:14px')+ic('fit',24,26,'margin-left:15px')+ic('caret',8,5,'margin-left:8px')+ic('display',23,26,'margin-left:22px')+ic('caret',8,5,'margin-left:5px')+ic('gridv',24,26,'margin-left:11px')+ic('caret',8,5,'margin-left:3px')+ic('views',24,26,'margin-left:10px')+ic('caret',8,5,'margin-left:4px');}}
class FuTimeline extends Base{connectedCallback(){
 const seq='tsk tsw ext tpl tsk org era ext ext ext tbx tfn tsk ext tsk ext tsk ext tsk ext'.split(' '),fad='tsk ext con tsk ext fil fil mov mov mov tsk'.split(' ');
 const cell=(n,f)=>`<div class="c" style="${f?'opacity:.28':''}">${ic(n,24,25)}</div>`;
 this.shadowRoot.innerHTML=host('display:flex;flex:none;position:relative;box-sizing:border-box;height:53px;background:#f0f0f0;border-top:2px solid #d2d2d2;padding-left:17px;align-items:flex-start',`
 .c{width:35.95px;flex:none;display:flex;justify-content:center;padding-top:22px}
 .p{display:flex;margin-top:25px}.items{display:flex;margin-left:27.6px}
 .m{position:absolute;left:925px;top:14px}`)+
 `<div class="p">${ic('first',19,22)}${ic('prev',19,22,'margin-left:18px')}${ic('play',18,22,'margin-left:19px')}${ic('next',19,22,'margin-left:19px')}${ic('last',18,22,'margin-left:20px')}</div><div class="items">${seq.map(n=>cell(n)).join('')}${fad.map(n=>cell(n,1)).join('')}</div>${ic('gear',24,24,'margin:23px 20px 0 auto')}
 <svg class="m" width="18" height="37"><path d="M0 0h18v9l-7 5V37H7.500V14L0 9z" fill="#666"/></svg>`;}}
class FuTaskbar extends Base{connectedCallback(){this.shadowRoot.innerHTML=host('display:flex;align-items:center;box-sizing:border-box;width:1920px;height:46px;background:linear-gradient(90deg,#2f3430,#2c2d2d 50%,#2f3330);padding-left:15px;color:#f2f2f2;font:17.05px "Open Sans","Noto Sans",sans-serif',`
 .sep{width:1px;height:30px;background:#5a5d5a;margin-left:24px;flex:none}
 .btn{display:flex;align-items:center;box-sizing:border-box;height:46px;flex:none;border-bottom:3px solid #f9c0ab;padding-top:3px;white-space:nowrap}
 .logo{width:23px;height:24px;background:linear-gradient(135deg,#fbd9bb,#fdeede);color:#c5752a;font:bold 21px/24px "Liberation Sans",sans-serif;text-align:center;flex:none}
 .help{width:22px;height:24px;border-radius:50%;background:#0a84d6;border:2px solid #fff;box-sizing:border-box;margin-left:434px;color:#fff;font:bold 16px/20px "Liberation Sans",sans-serif;text-align:center;flex:none}
 .time{width:66px;margin-left:29px;white-space:nowrap;font-size:16.5px;flex:none}`)+
 ic('win',25,24)+ic('search',25,24,'margin-left:29px')+ic('ring',22,22,'margin-left:30px')+ic('taskview',25,24,'margin-left:31px')+`<div class="sep"></div>
 <div class="btn" style="margin-left:27px;width:228px;padding-left:7px">${ic('chrome',22,22)}<span style="margin-left:6px">Project Editor - Instruc...</span></div>`+
 ic('folder',22,22,'margin-left:24px')+ic('mail',24,26,'margin-left:34px')+ic('snip',24,26,'margin-left:34px')+
 `<div class="btn" style="margin-left:17px;width:240px;padding-left:12px;background:#565858">${'<div class="logo">F</div>'}<span style="margin-left:6px">Autodesk Fusion 360 ...</span></div><div class="help">?</div>`+
 ic('chev',18,10,'margin-left:16px')+ic('cloud',24,16,'margin-left:27px')+ic('mic',15,24,'margin-left:28px')+ic('tablet',24,24,'margin-left:29px')+ic('battery',24,18,'margin-left:24px')+ic('wifi',18,20,'margin-left:28px')+ic('vol',21,20,'margin-left:27px')+ic('pen',20,24,'margin-left:28px')+`<div class="time">1:34 AM</div>`+ic('notif',24,25,'margin-left:34px');}}
[['fu-icon',FuIcon],['fu-app',FuApp],['fu-titlebar',FuTitlebar],['fu-tab',FuTab],['fu-tabbar',FuTabbar],['fu-ribbon',FuRibbon],['fu-group',FuGroup],['fu-viewport',FuViewport],['fu-browser',FuBrowser],['fu-comments',FuComments],['fu-body-row',FuBodyRow],['fu-navbar',FuNavbar],['fu-timeline',FuTimeline],['fu-taskbar',FuTaskbar]].forEach(([n,c])=>customElements.define(n,c));
</script>
</body></html>
